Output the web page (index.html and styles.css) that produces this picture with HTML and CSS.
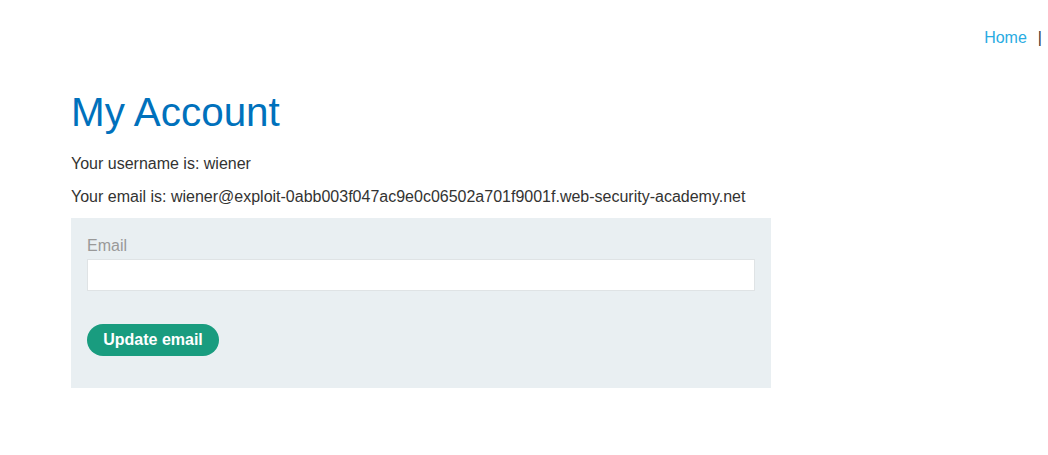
FILE: index.html
```html
<!DOCTYPE html>
<html>
<head>
<meta charset="utf-8">
<title>My Account</title>
<link rel="stylesheet" href="styles.css">
</head>
<body>
<header class="top-links">
  <a class="nav-link" href="#">Home</a>
  <span class="sep">|</span>
</header>
<main class="container">
  <h1 class="title">My Account</h1>
  <p class="info">Your username is: wiener</p>
  <p class="info">Your email is: wiener@exploit-0abb003f047ac9e0c06502a701f9001f.web-security-academy.net</p>
  <form class="email-form">
    <label class="field-label" for="email">Email</label>
    <input class="field-input" id="email" type="email" name="email">
    <button class="btn" type="button">Update email</button>
  </form>
</main>
</body>
</html>
```
FILE: styles.css
```css
html, body {
  margin: 0;
  padding: 0;
  background: #ffffff;
}
body {
  font-family: "Liberation Sans", Arial, sans-serif;
  font-size: 16px;
  color: #333332;
}
.top-links {
  display: flex;
  justify-content: flex-end;
  align-items: center;
  gap: 11px;
  padding: 26px 6px 0 0;
  line-height: 24px;
}
.nav-link {
  color: #29abe2;
  text-decoration: none;
}
.sep {
  color: #333332;
}
.container {
  padding: 39px 0 0 71px;
}
.title {
  margin: 0 0 17px;
  font-size: 40.4px;
  line-height: 46px;
  font-weight: normal;
  color: #0071bc;
}
.info {
  margin: 0 0 9px;
  line-height: 24px;
}
.email-form {
  box-sizing: border-box;
  width: 700px;
  margin-top: 9px;
  padding: 17px 16px 32px;
  background: #e9eff2;
  display: flex;
  flex-direction: column;
  align-items: flex-start;
}
.field-label {
  color: #999999;
  line-height: 22px;
}
.field-input {
  box-sizing: border-box;
  margin-top: 2px;
  width: 100%;
  height: 32px;
  border: 1px solid #dfe3e5;
  background: #ffffff;
  padding: 0 8px;
  font: inherit;
  outline: none;
}
.btn {
  margin-top: 33px;
  height: 32px;
  width: 132px;
  border: none;
  border-radius: 16px;
  background: #199c7f;
  color: #ffffff;
  font-family: "Liberation Sans", Arial, sans-serif;
  font-size: 16px;
  font-weight: bold;
  padding: 0;
  cursor: pointer;
}
```
